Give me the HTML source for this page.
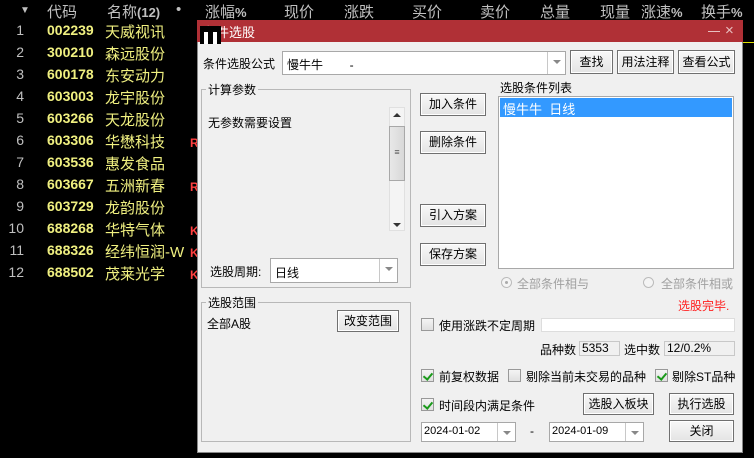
<!DOCTYPE html><html><head><meta charset="utf-8"><style>
*{margin:0;padding:0;box-sizing:border-box}
body{width:754px;height:458px;background:#000;overflow:hidden;position:relative;font-family:"Liberation Sans","Noto Sans CJK SC",sans-serif;font-size:13px}
.a{position:absolute;white-space:nowrap}
.h{color:#c0c0c0;font-size:15px;top:1px}
.n{color:#c0c0c0;font-size:14px;width:24px;text-align:right}
.c{color:#f0f080;font-size:14px;font-weight:bold;left:47px}
.m{color:#f0f080;font-size:15px;left:105px}
.r{color:#ff4040;font-size:12px;font-weight:bold;left:190px}
.t{color:#000;font-size:12px}
.btn{position:absolute;background:linear-gradient(#f8f8f8,#e4e4e4);border:1px solid #707070;box-shadow:inset 0 0 0 1px #fff;font-size:12px;text-align:center;color:#000}
.box{position:absolute;background:#fff;border:1px solid #a8a8a8}
.dd{position:absolute;top:0;bottom:0;right:0;width:18px;border-left:1px solid #c8c8c8}
.dd:after{content:"";position:absolute;left:5px;top:8px;border:4px solid transparent;border-top:4px solid #888}
.grp{position:absolute;border:1px solid #b8b8b8}
.gl{position:absolute;background:#f0f0f0;padding:0 2px;font-size:12px;top:-9px;left:4px}
.cb{position:absolute;width:13px;height:13px;border:1px solid #999;background:linear-gradient(#f4f4f4,#e0e0e0)}
.cb.k:after{content:"";position:absolute;left:3px;top:1px;width:4px;height:7px;border:solid #1a9a1a;border-width:0 2px 2px 0;transform:rotate(40deg)}
.ro{position:absolute;background:#f0f0f0;border:1px solid #c8c8c8;font-size:12px;padding-left:2px;line-height:13px}
</style></head><body>
<div class="a h" style="left:20px;font-size:10px;top:5px">▼</div>
<div class="a h" style="left:47px">代码</div>
<div class="a h" style="left:107px">名称<b style="font-size:13px">(12)</b></div>
<div class="a h" style="left:176px">•</div>
<div class="a h" style="left:205px">涨幅<b style="font-size:13px">%</b></div>
<div class="a h" style="left:284px">现价</div>
<div class="a h" style="left:344px">涨跌</div>
<div class="a h" style="left:412px">买价</div>
<div class="a h" style="left:480px">卖价</div>
<div class="a h" style="left:540px">总量</div>
<div class="a h" style="left:600px">现量</div>
<div class="a h" style="left:641px">涨速<b style="font-size:13px">%</b></div>
<div class="a h" style="left:701px">换手<b style="font-size:13px">%</b></div>

<div class="a n" style="top:22px">1</div><div class="a c" style="top:22px">002239</div><div class="a m" style="top:21px">天威视讯</div>
<div class="a n" style="top:44px">2</div><div class="a c" style="top:44px">300210</div><div class="a m" style="top:43px">森远股份</div>
<div class="a n" style="top:66px">3</div><div class="a c" style="top:66px">600178</div><div class="a m" style="top:65px">东安动力</div>
<div class="a n" style="top:88px">4</div><div class="a c" style="top:88px">603003</div><div class="a m" style="top:87px">龙宇股份</div>
<div class="a n" style="top:110px">5</div><div class="a c" style="top:110px">603266</div><div class="a m" style="top:109px">天龙股份</div>
<div class="a n" style="top:132px">6</div><div class="a c" style="top:132px">603306</div><div class="a m" style="top:131px">华懋科技</div><div class="a r" style="top:136px">R</div>
<div class="a n" style="top:154px">7</div><div class="a c" style="top:154px">603536</div><div class="a m" style="top:153px">惠发食品</div>
<div class="a n" style="top:176px">8</div><div class="a c" style="top:176px">603667</div><div class="a m" style="top:175px">五洲新春</div><div class="a r" style="top:180px">R</div>
<div class="a n" style="top:198px">9</div><div class="a c" style="top:198px">603729</div><div class="a m" style="top:197px">龙韵股份</div>
<div class="a n" style="top:220px">10</div><div class="a c" style="top:220px">688268</div><div class="a m" style="top:219px">华特气体</div><div class="a r" style="top:224px">K</div>
<div class="a n" style="top:242px">11</div><div class="a c" style="top:242px">688326</div><div class="a m" style="top:241px">经纬恒润-W</div><div class="a r" style="top:246px">K</div>
<div class="a n" style="top:264px">12</div><div class="a c" style="top:264px">688502</div><div class="a m" style="top:263px">茂莱光学</div><div class="a r" style="top:268px">K</div>
<div class="a" style="left:743px;top:42px;width:11px;height:1px;background:#e0e000"></div>

<div class="a" style="left:197px;top:20px;width:546px;height:433px;background:#f0f0f0;border:1px solid #888"></div>
<div class="a" style="left:197px;top:20px;width:546px;height:22px;background:#b03036"></div>
<div class="a" style="left:203px;top:22px;color:#fff;font-size:13px">条件选股</div>
<div class="a" style="left:200px;top:26px;width:21px;height:18px;background:#000"></div>
<div class="a" style="left:204px;top:32px;width:4px;height:12px;background:#fff"></div>
<div class="a" style="left:213px;top:32px;width:4px;height:12px;background:#fff"></div>
<div class="a" style="left:708px;top:31px;width:12px;height:1px;background:#e8c0c0"></div>
<div class="a" style="left:725px;top:22px;color:#e8c0c0;font-size:15px">×</div>

<div class="a t" style="left:203px;top:55px">条件选股公式</div>
<div class="box" style="left:282px;top:51px;width:284px;height:24px"><span class="a t" style="left:4px;top:4px">慢牛牛 &nbsp; &nbsp; &nbsp; &nbsp;-</span><div class="dd"></div></div>
<div class="btn" style="left:570px;top:50px;width:43px;height:24px;line-height:22px">查找</div>
<div class="btn" style="left:617px;top:50px;width:57px;height:24px;line-height:22px">用法注释</div>
<div class="btn" style="left:678px;top:50px;width:57px;height:24px;line-height:22px">查看公式</div>

<div class="grp" style="left:201px;top:89px;width:210px;height:199px"><span class="gl">计算参数</span></div>
<div class="a t" style="left:208px;top:114px">无参数需要设置</div>
<div class="a" style="left:389px;top:107px;width:16px;height:124px;background:#f4f4f4;border:1px solid #e0e0e0"></div>
<div class="a" style="left:393px;top:113px;border:4px solid transparent;border-bottom:4px solid #333;border-top-width:0"></div>
<div class="a" style="left:393px;top:223px;border:4px solid transparent;border-top:4px solid #333;border-bottom-width:0"></div>
<div class="a" style="left:389px;top:126px;width:16px;height:55px;background:linear-gradient(90deg,#e8e8e8,#d8d8d8);border:1px solid #a8a8a8;color:#555;font-size:9px;text-align:center;line-height:50px">≡</div>
<div class="a t" style="left:210px;top:263px">选股周期:</div>
<div class="box" style="left:270px;top:258px;width:128px;height:25px"><span class="a t" style="left:4px;top:5px">日线</span><div class="dd"></div></div>

<div class="btn" style="left:420px;top:93px;width:66px;height:23px;line-height:21px">加入条件</div>
<div class="btn" style="left:420px;top:131px;width:66px;height:23px;line-height:21px">删除条件</div>
<div class="btn" style="left:420px;top:204px;width:66px;height:23px;line-height:21px">引入方案</div>
<div class="btn" style="left:420px;top:243px;width:66px;height:23px;line-height:21px">保存方案</div>

<div class="a t" style="left:500px;top:79px">选股条件列表</div>
<div class="box" style="left:498px;top:96px;width:236px;height:173px"></div>
<div class="a" style="left:500px;top:98px;width:232px;height:19px;background:#3399ff;color:#fff;font-size:13px;padding:1px 0 0 3px">慢牛牛 &nbsp;日线</div>
<div class="a" style="left:501px;top:277px;width:11px;height:11px;border-radius:50%;border:1px solid #bbb;background:#f4f4f4"><div style="position:absolute;left:3px;top:3px;width:3px;height:3px;border-radius:50%;background:#aaa"></div></div>
<div class="a" style="left:517px;top:275px;color:#a0a0a0;font-size:12px">全部条件相与</div>
<div class="a" style="left:643px;top:277px;width:11px;height:11px;border-radius:50%;border:1px solid #bbb;background:#f4f4f4"></div>
<div class="a" style="left:661px;top:275px;color:#a0a0a0;font-size:12px">全部条件相或</div>

<div class="grp" style="left:201px;top:302px;width:210px;height:140px"><span class="gl">选股范围</span></div>
<div class="a t" style="left:207px;top:315px">全部A股</div>
<div class="btn" style="left:337px;top:310px;width:62px;height:22px;line-height:20px">改变范围</div>

<div class="a" style="left:678px;top:297px;color:#ff2020;font-size:12px">选股完毕.</div>
<div class="cb" style="left:421px;top:318px"></div>
<div class="a t" style="left:439px;top:317px">使用涨跌不定周期</div>
<div class="box" style="left:541px;top:318px;width:194px;height:14px;border-color:#ddd"></div>
<div class="a t" style="left:540px;top:341px">品种数</div>
<div class="ro" style="left:579px;top:341px;width:41px;height:15px">5353</div>
<div class="a t" style="left:624px;top:341px">选中数</div>
<div class="ro" style="left:664px;top:341px;width:71px;height:15px">12/0.2%</div>

<div class="cb k" style="left:421px;top:369px"></div><div class="a t" style="left:439px;top:368px">前复权数据</div>
<div class="cb" style="left:508px;top:369px"></div><div class="a t" style="left:526px;top:368px">剔除当前未交易的品种</div>
<div class="cb k" style="left:655px;top:369px"></div><div class="a t" style="left:672px;top:368px">剔除ST品种</div>
<div class="cb k" style="left:421px;top:398px"></div><div class="a t" style="left:439px;top:397px">时间段内满足条件</div>
<div class="btn" style="left:583px;top:393px;width:71px;height:22px;line-height:20px">选股入板块</div>
<div class="btn" style="left:669px;top:393px;width:65px;height:22px;line-height:20px">执行选股</div>
<div class="btn" style="left:669px;top:420px;width:65px;height:22px;line-height:20px">关闭</div>
<div class="box" style="left:421px;top:422px;width:95px;height:20px"><span class="a" style="left:2px;top:2px;font-size:11px">2024-01-02</span><div class="dd"></div></div>
<div class="a t" style="left:530px;top:424px">-</div>
<div class="box" style="left:549px;top:422px;width:95px;height:20px"><span class="a" style="left:2px;top:2px;font-size:11px">2024-01-09</span><div class="dd"></div></div>
</body></html>
